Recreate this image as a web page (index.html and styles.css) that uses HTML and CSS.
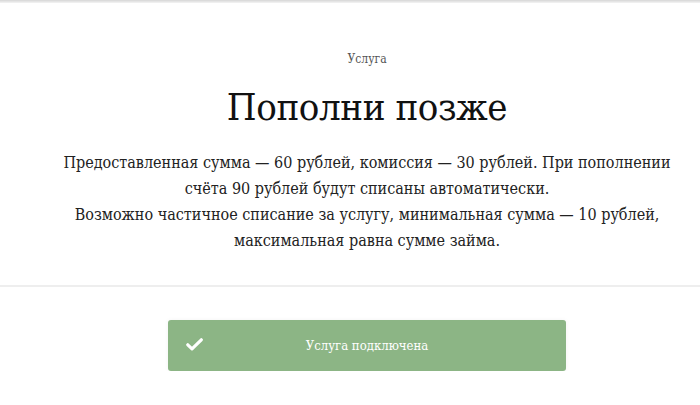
FILE: index.html
```html
<!DOCTYPE html>
<html lang="ru">
<head>
<meta charset="utf-8">
<link rel="stylesheet" href="styles.css">
</head>
<body>
<div class="topbar"></div>
<section class="service">
  <div class="label">Услуга</div>
  <h1 class="title">Пополни позже</h1>
  <p class="desc">Предоставленная сумма — 60 рублей, комиссия — 30 рублей. При пополнении счёта 90 рублей будут списаны автоматически.<br>Возможно частичное списание за услугу, минимальная сумма — 10 рублей, максимальная равна сумме займа.</p>
</section>
<div class="divider"></div>
<div class="actions">
  <div class="status">
    <svg class="check" width="17" height="13" viewBox="0 0 17 13"><path d="M1.8 6.8 L6 10.8 L15.3 1.8" fill="none" stroke="#fff" stroke-width="3.2" stroke-linecap="round" stroke-linejoin="round"/></svg>
    <span class="status-text">Услуга подключена</span>
  </div>
</div>
</body>
</html>
```
FILE: styles.css
```css
html, body {
  margin: 0;
  padding: 0;
  background: #fff;
}
body {
  font-family: "DejaVu Serif Condensed", "DejaVu Serif", serif;
  color: #1a1a1a;
}
.topbar {
  height: 3px;
  background: linear-gradient(#d6d6d6, #f4f4f4);
}
.service {
  display: flex;
  flex-direction: column;
  align-items: center;
  padding: 48px 0 0 34px;
  text-align: center;
}
.label {
  font-size: 12px;
  color: #555;
  line-height: 16px;
}
.title {
  margin: 16px 0 0;
  font-weight: normal;
  font-size: 38px;
  letter-spacing: -0.4px;
  line-height: 48px;
  color: #111;
}
.desc {
  margin: 19px 0 0;
  font-size: 16px;
  line-height: 26px;
  color: #222;
  max-width: 620px;
}
.divider {
  margin-top: 31px;
  height: 2px;
  background: #eeeeee;
}
.actions {
  display: flex;
  justify-content: center;
  padding: 33px 0 0 34px;
}
.status {
  position: relative;
  width: 398px;
  height: 51px;
  background: #8cb585;
  border-radius: 3px;
  display: flex;
  align-items: center;
  justify-content: center;
  box-shadow: 0 0 4px rgba(0,0,0,0.05);
}
.check {
  position: absolute;
  left: 18px;
  top: 18px;
}
.status-text {
  color: #fff;
  font-size: 13px;
}
```
